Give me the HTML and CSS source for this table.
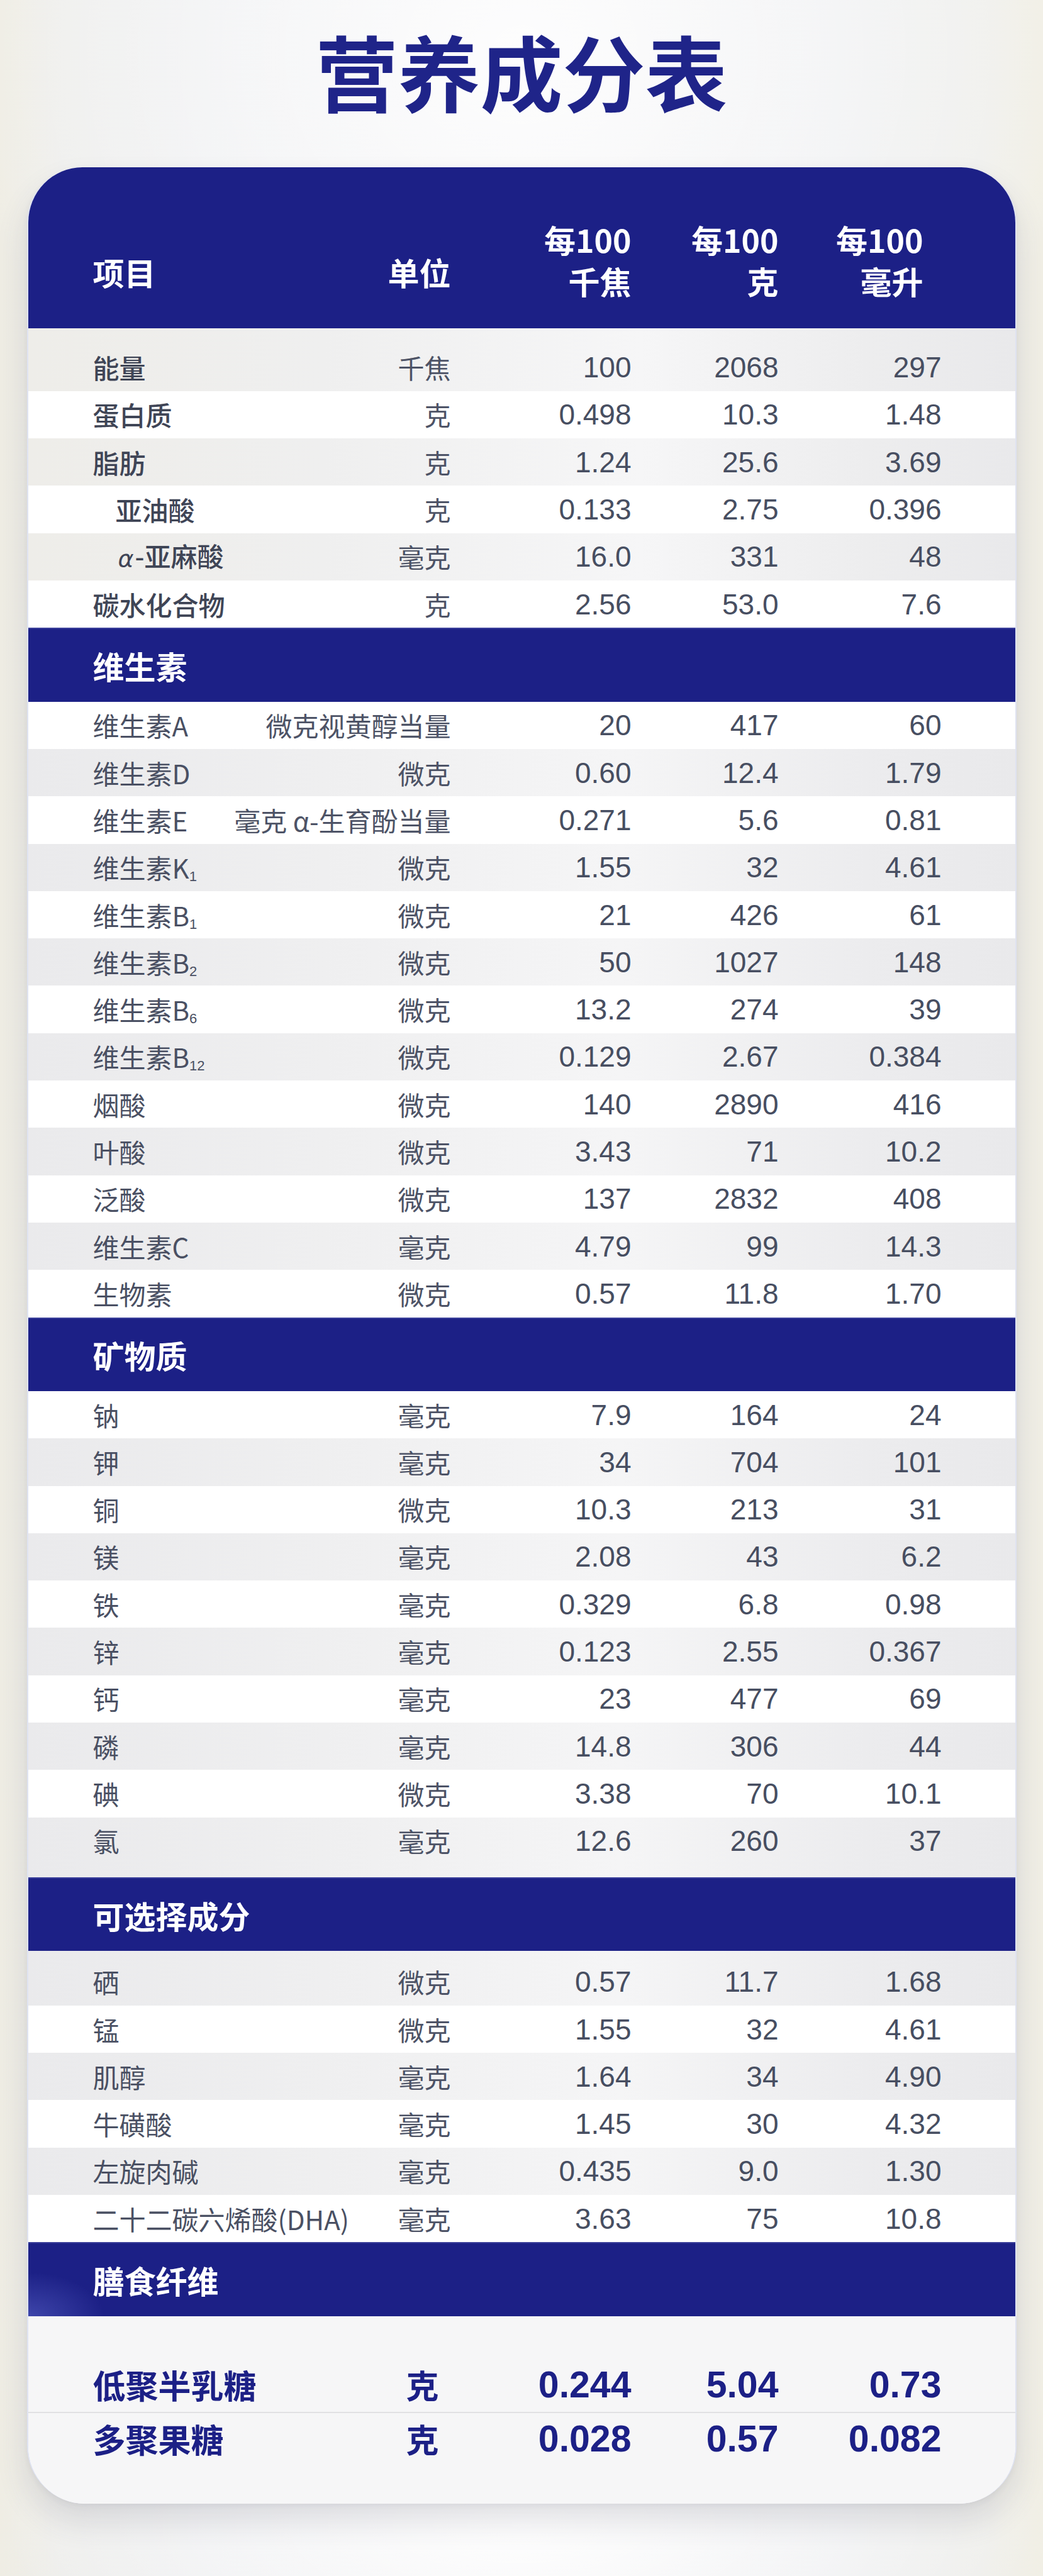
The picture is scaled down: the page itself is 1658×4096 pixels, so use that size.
FILE: index.html
```html
<!DOCTYPE html>
<html lang="zh-CN">
<head>
<meta charset="utf-8">
<title>营养成分表</title>
<link rel="stylesheet" href="styles.css">
</head>
<body>
<div class="page">
  <h1 class="title">营养成分表</h1>
  <div class="card">
    <div class="thead grid">
      <div class="h-name">项目</div>
      <div class="h-unit">单位</div>
      <div class="h-num">每100<br>千焦</div>
      <div class="h-num">每100<br>克</div>
      <div class="h-num h-last">每100<br>毫升</div>
    </div>

    <div class="group g1">
      <div class="row grid grey first"><div class="name b">能量</div><div class="unit">千焦</div><div class="num">100</div><div class="num">2068</div><div class="num">297</div></div>
      <div class="row grid"><div class="name b">蛋白质</div><div class="unit">克</div><div class="num">0.498</div><div class="num">10.3</div><div class="num">1.48</div></div>
      <div class="row grid grey"><div class="name b">脂肪</div><div class="unit">克</div><div class="num">1.24</div><div class="num">25.6</div><div class="num">3.69</div></div>
      <div class="row grid"><div class="name b ind">亚油酸</div><div class="unit">克</div><div class="num">0.133</div><div class="num">2.75</div><div class="num">0.396</div></div>
      <div class="row grid grey"><div class="name b ind2"><i class="alpha">α</i>-亚麻酸</div><div class="unit">毫克</div><div class="num">16.0</div><div class="num">331</div><div class="num">48</div></div>
      <div class="row grid"><div class="name b">碳水化合物</div><div class="unit">克</div><div class="num">2.56</div><div class="num">53.0</div><div class="num">7.6</div></div>
    </div>

    <div class="section">维生素</div>
    <div class="group">
      <div class="row grid"><div class="name">维生素A</div><div class="unit">微克视黄醇当量</div><div class="num">20</div><div class="num">417</div><div class="num">60</div></div>
      <div class="row grid grey"><div class="name">维生素D</div><div class="unit">微克</div><div class="num">0.60</div><div class="num">12.4</div><div class="num">1.79</div></div>
      <div class="row grid"><div class="name">维生素E</div><div class="unit">毫克 α-生育酚当量</div><div class="num">0.271</div><div class="num">5.6</div><div class="num">0.81</div></div>
      <div class="row grid grey"><div class="name">维生素K<sub>1</sub></div><div class="unit">微克</div><div class="num">1.55</div><div class="num">32</div><div class="num">4.61</div></div>
      <div class="row grid"><div class="name">维生素B<sub>1</sub></div><div class="unit">微克</div><div class="num">21</div><div class="num">426</div><div class="num">61</div></div>
      <div class="row grid grey"><div class="name">维生素B<sub>2</sub></div><div class="unit">微克</div><div class="num">50</div><div class="num">1027</div><div class="num">148</div></div>
      <div class="row grid"><div class="name">维生素B<sub>6</sub></div><div class="unit">微克</div><div class="num">13.2</div><div class="num">274</div><div class="num">39</div></div>
      <div class="row grid grey"><div class="name">维生素B<sub>12</sub></div><div class="unit">微克</div><div class="num">0.129</div><div class="num">2.67</div><div class="num">0.384</div></div>
      <div class="row grid"><div class="name">烟酸</div><div class="unit">微克</div><div class="num">140</div><div class="num">2890</div><div class="num">416</div></div>
      <div class="row grid grey"><div class="name">叶酸</div><div class="unit">微克</div><div class="num">3.43</div><div class="num">71</div><div class="num">10.2</div></div>
      <div class="row grid"><div class="name">泛酸</div><div class="unit">微克</div><div class="num">137</div><div class="num">2832</div><div class="num">408</div></div>
      <div class="row grid grey"><div class="name">维生素C</div><div class="unit">毫克</div><div class="num">4.79</div><div class="num">99</div><div class="num">14.3</div></div>
      <div class="row grid"><div class="name">生物素</div><div class="unit">微克</div><div class="num">0.57</div><div class="num">11.8</div><div class="num">1.70</div></div>
    </div>

    <div class="section">矿物质</div>
    <div class="group">
      <div class="row grid"><div class="name">钠</div><div class="unit">毫克</div><div class="num">7.9</div><div class="num">164</div><div class="num">24</div></div>
      <div class="row grid grey"><div class="name">钾</div><div class="unit">毫克</div><div class="num">34</div><div class="num">704</div><div class="num">101</div></div>
      <div class="row grid"><div class="name">铜</div><div class="unit">微克</div><div class="num">10.3</div><div class="num">213</div><div class="num">31</div></div>
      <div class="row grid grey"><div class="name">镁</div><div class="unit">毫克</div><div class="num">2.08</div><div class="num">43</div><div class="num">6.2</div></div>
      <div class="row grid"><div class="name">铁</div><div class="unit">毫克</div><div class="num">0.329</div><div class="num">6.8</div><div class="num">0.98</div></div>
      <div class="row grid grey"><div class="name">锌</div><div class="unit">毫克</div><div class="num">0.123</div><div class="num">2.55</div><div class="num">0.367</div></div>
      <div class="row grid"><div class="name">钙</div><div class="unit">毫克</div><div class="num">23</div><div class="num">477</div><div class="num">69</div></div>
      <div class="row grid grey"><div class="name">磷</div><div class="unit">毫克</div><div class="num">14.8</div><div class="num">306</div><div class="num">44</div></div>
      <div class="row grid"><div class="name">碘</div><div class="unit">微克</div><div class="num">3.38</div><div class="num">70</div><div class="num">10.1</div></div>
      <div class="row grid grey last"><div class="name">氯</div><div class="unit">毫克</div><div class="num">12.6</div><div class="num">260</div><div class="num">37</div></div>
    </div>

    <div class="section">可选择成分</div>
    <div class="group">
      <div class="row grid grey first-s"><div class="name">硒</div><div class="unit">微克</div><div class="num">0.57</div><div class="num">11.7</div><div class="num">1.68</div></div>
      <div class="row grid"><div class="name">锰</div><div class="unit">微克</div><div class="num">1.55</div><div class="num">32</div><div class="num">4.61</div></div>
      <div class="row grid grey"><div class="name">肌醇</div><div class="unit">毫克</div><div class="num">1.64</div><div class="num">34</div><div class="num">4.90</div></div>
      <div class="row grid"><div class="name">牛磺酸</div><div class="unit">毫克</div><div class="num">1.45</div><div class="num">30</div><div class="num">4.32</div></div>
      <div class="row grid grey"><div class="name">左旋肉碱</div><div class="unit">毫克</div><div class="num">0.435</div><div class="num">9.0</div><div class="num">1.30</div></div>
      <div class="row grid"><div class="name">二十二碳六烯酸(DHA)</div><div class="unit">毫克</div><div class="num">3.63</div><div class="num">75</div><div class="num">10.8</div></div>
    </div>

    <div class="section section-glow">膳食纤维</div>
    <div class="fiber">
      <div class="frow grid"><div class="fname">低聚半乳糖</div><div class="funit">克</div><div class="fnum">0.244</div><div class="fnum">5.04</div><div class="fnum">0.73</div></div>
      <div class="frow grid sep"><div class="fname">多聚果糖</div><div class="funit">克</div><div class="fnum">0.028</div><div class="fnum">0.57</div><div class="fnum">0.082</div></div>
    </div>
  </div>
</div>
</body>
</html>
```

FILE: styles.css
```css
* { box-sizing: border-box; }

html, body {
  margin: 0;
  padding: 0;
}

body {
  width: 1658px;
  min-height: 4096px;
  font-family: "Noto Sans CJK SC", sans-serif;
  background:
    radial-gradient(ellipse 55% 20% at 50% 2%, rgba(255,255,255,0.85), rgba(255,255,255,0) 100%),
    radial-gradient(ellipse 50% 8% at 50% 98%, rgba(255,255,255,0.9), rgba(255,255,255,0) 100%),
    linear-gradient(90deg, #efede4 0%, #eeeeec 6%, #eeeff1 20%, #f2f2f4 50%, #eeeff1 80%, #efefec 94%, #f1efe5 100%);
}

.page {
  padding-top: 36px;
  padding-bottom: 112px;
}

.title {
  margin: 0;
  text-align: center;
  font-family: "Noto Sans CJK SC", sans-serif;
  font-weight: 700;
  font-size: 131px;
  line-height: 150px;
  color: #1f2489;
  letter-spacing: 0;
}

.card {
  width: 1573px;
  margin: 80px auto 0;
  background: #ffffff;
  border-radius: 88px 88px 92px 92px;
  overflow: hidden;
  border-left: 2px solid #dfe3f1;
  border-right: 2px solid #dfe3f1;
  box-shadow: 0 28px 50px rgba(60, 60, 80, 0.14), 0 4px 10px rgba(60, 60, 80, 0.06);
}

.grid {
  display: grid;
  grid-template-columns: 250px 319px 287px 234px 259px;
  padding-left: 103px;
}

/* header */
.thead {
  height: 256px;
  background: #1c2086;
  color: #ffffff;
  font-weight: 700;
  font-size: 50px;
  line-height: 66px;
  align-items: end;
  padding-bottom: 43px;
}

.h-name, .h-unit {
  white-space: nowrap;
  padding-bottom: 14px;
}

.h-unit, .h-num { text-align: right; }

.h-last { padding-right: 29px; }

/* rows */
.row {
  height: 75.3px;
  align-items: center;
  background: #ffffff;
  color: #4a5063;
}

.row.grey {
  background: linear-gradient(90deg, #eaeaec 0%, #efeff0 30%, #f5f5f6 60%, #ececee 85%, #e9e9eb 100%);
}

.g1 .row.grey {
  background: linear-gradient(90deg, #eeede9 0%, #efefef 30%, #f6f6f7 62%, #ededee 85%, #e9e9eb 100%);
}

.row.first { height: 99.8px; padding-top: 24.5px; }
.row.first-s { height: 86.6px; padding-top: 11.3px; }
.row.last { height: 95.3px; padding-bottom: 20px; }

.name, .unit {
  font-family: "Noto Sans CJK SC", sans-serif;
  font-size: 42px;
  line-height: 52px;
  white-space: nowrap;
}

.name.b { font-weight: 500; color: #3f4556; }
.name.ind { padding-left: 36px; }
.name.ind2 { padding-left: 40px; }

.alpha {
  font-family: "DejaVu Sans", sans-serif;
  font-style: italic;
  font-weight: 400;
  font-size: 38px;
  margin-right: 2px;
}

.name sub {
  font-family: "Liberation Sans", sans-serif;
  font-size: 22px;
  line-height: 0;
  vertical-align: -4px;
}

.unit {
  text-align: right;
  justify-self: end;
  color: #4d5366;
}

.num {
  font-family: "Liberation Sans", sans-serif;
  font-size: 46px;
  line-height: 52px;
  text-align: right;
  color: #474e61;
}

/* section headers */
.section {
  height: 117.4px;
  display: flex;
  align-items: center;
  padding-left: 103px;
  background: #1c2086;
  border-top: 2px solid #3a3f9a;
  color: #ffffff;
  font-weight: 700;
  font-size: 50px;
}

.section-glow {
  background:
    radial-gradient(ellipse 120px 70px at 0% 100%, rgba(90, 100, 200, 0.55), rgba(90, 100, 200, 0) 100%),
    #1c2086;
}

/* fiber */
.fiber {
  background: #f6f6f7;
  padding: 67px 0 61px;
}

.frow {
  height: 85px;
  align-items: center;
  color: #1c2086;
  font-weight: 700;
}

.frow.sep {
  border-top: 2px solid #e1e1e3;
}

.fname, .funit {
  font-family: "Noto Sans CJK SC", sans-serif;
  font-size: 52px;
  line-height: 60px;
  white-space: nowrap;
}

.funit {
  text-align: right;
  padding-right: 19px;
}

.fnum {
  font-family: "Liberation Sans", sans-serif;
  font-size: 59px;
  line-height: 66px;
  text-align: right;
}
```
